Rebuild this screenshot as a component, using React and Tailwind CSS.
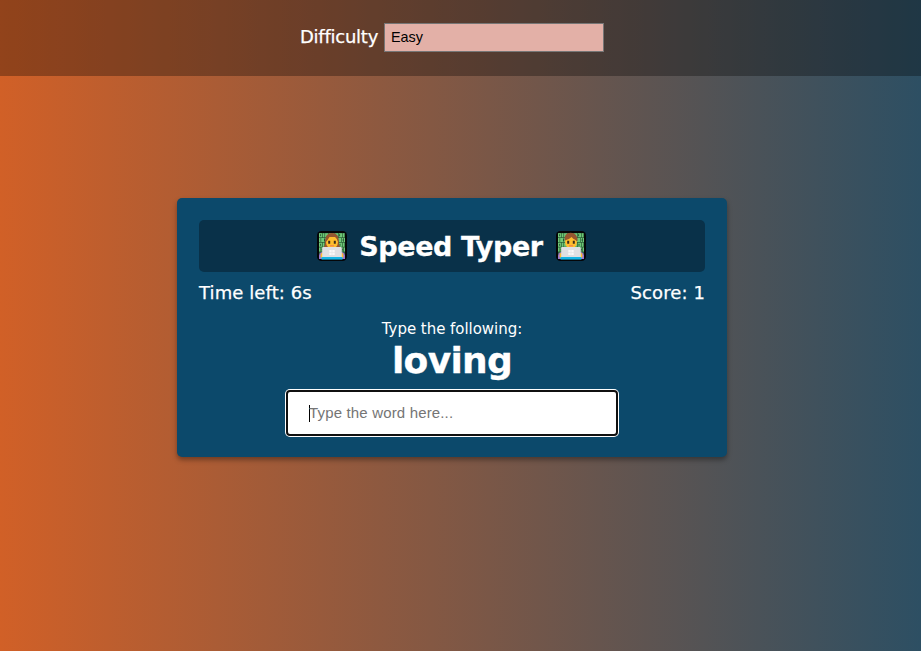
function Technologist({ woman }) {
  return (
    <svg className="h-[32px] w-[32px] shrink-0" viewBox="0 0 32 32" aria-hidden="true">
      <rect x="1" y="1" width="30" height="30" rx="4.5" fill="#050608" />
      <rect x="3" y="3" width="26" height="21" fill="#2c6038" />
      <g fill="none" stroke="#6fc877" strokeWidth="4">
        <path strokeDasharray="3.2 .7 1.5 .7 3.2 .7" d="M3 5.2h26M3 14.8h26" />
        <path strokeDasharray="1.5 .7 3.2 .7 1.5 .7" d="M3 10h26M3 19.6h26" />
      </g>
      <path
        stroke="#234d31"
        strokeWidth=".9"
        d="M4.600 4.200v2M8.500 9v2M4.600 13.800v2M23.600 4.200v2M27.200 9v2M24 13.800v2M6 18.600v2M26.600 18.600v2"
      />
      <path d="M3 29v-3q0-4 4-4h18q4 0 4 4v3z" fill="#9a77d0" />
      {woman && <path d="M7.500 17.500q1.700-2 1.700-7 0-7 6.800-7t6.800 7q0 5 1.700 7z" fill="#965630" />}
      <ellipse cx="16" cy="12" rx="6" ry="6.600" fill="#ffbd2e" />
      {woman ? (
        <path d="M9.500 12.500q-.5-9.400 6.500-9.400t6.500 9.400q-.8-3.500-3.500-5.500h-5.500q-2 3.500-4 5.500z" fill="#965630" />
      ) : (
        <path d="M9.600 10.500q-.8-7.700 6-7.700 7.200 0 7 8.500-1.500-.5-2.500-1.500-2-.8-3.500-2.800-2.500 2.800-7 3.500z" fill="#965630" />
      )}
      <path d="M12.200 10.800h2v2.900h-2zM17.800 10.800h2v2.900h-2z" fill="#3a2b1a" />
      <path d="M14 15.200h4v1.200h-4z" fill="#f0824b" />
      <path d="M4.500 26q0-3.500 2.500-3.500V28H5zM27.500 26q0-3.500-2.500-3.500V28h2z" fill="#ffbd2e" />
      <rect x="6.200" y="17" width="19.600" height="11" rx="1" fill="#dfe0e3" />
      <path d="M13.300 20h2.400v2.200h-2.400zM16.300 20h2.400v2.200h-2.400zM13.300 22.800h2.400V25h-2.400zM16.300 22.800h2.400V25h-2.400z" fill="#f8f8f8" />
      <path d="M5.500 27h21v2.600h-21z" fill="#16b5e5" />
    </svg>
  );
}

export default function App() {
  return (
    <div className="flex h-[651px] w-full flex-col overflow-hidden bg-linear-to-r/srgb from-[#d16027] to-[#2d4f63] font-['DejaVu_Sans',sans-serif] text-white">
      <header className="flex h-[76px] shrink-0 items-start bg-black/30 pt-[23px] pl-[300px]">
        <label className="w-[84px] shrink-0 text-[18px] leading-[27px] tracking-[-0.25px] whitespace-nowrap [-webkit-text-stroke:0.25px_white]">
          Difficulty
        </label>
        <div className="flex h-[29px] w-[220px] items-center border border-[#767676] bg-[#e3b0a7] pt-px pl-[6px] font-['Liberation_Sans',sans-serif] text-[14.4px] text-black">
          Easy
        </div>
      </header>
      <main className="mt-[122px] ml-[177px] flex h-[259px] w-[550px] flex-col rounded-[5px] bg-[#0c496b] px-[22px] pt-[22px] shadow-[0_3px_5px_rgba(0,0,0,0.35)]">
        <h1 className="flex h-[52px] shrink-0 items-center justify-center rounded-[5px] bg-[#093149] pr-[2px]">
          <Technologist woman />
          <span className="w-[207px] pt-[2px] text-center text-[27px] font-bold tracking-[-0.4px] whitespace-nowrap [-webkit-text-stroke:0.3px_white]">
            Speed Typer
          </span>
          <Technologist />
        </h1>
        <div className="mt-[8px] flex justify-between text-[18px] leading-[26px] tracking-[0.1px] [-webkit-text-stroke:0.25px_white]">
          <span>Time left: 6s</span>
          <span>Score: 1</span>
        </div>
        <p className="mt-[13px] text-center text-[15px] leading-[20px] tracking-[-0.04px]">Type the following:</p>
        <h2 className="pt-px text-center text-[36px] leading-[42px] font-bold tracking-[-0.7px] [-webkit-text-stroke:0.3px_white]">
          loving
        </h2>
        <div className="mt-[8px] flex h-[46px] w-[332px] shrink-0 items-center self-center rounded-[4px] border-2 border-[#101010] bg-white pl-[21px] font-['Liberation_Sans',sans-serif] text-[15px] tracking-[0.16px] text-[#757575] ring-1 ring-white">
          <span className="h-[17px] w-px bg-black" />
          <span className="-ml-px">Type the word here...</span>
        </div>
      </main>
    </div>
  );
}
